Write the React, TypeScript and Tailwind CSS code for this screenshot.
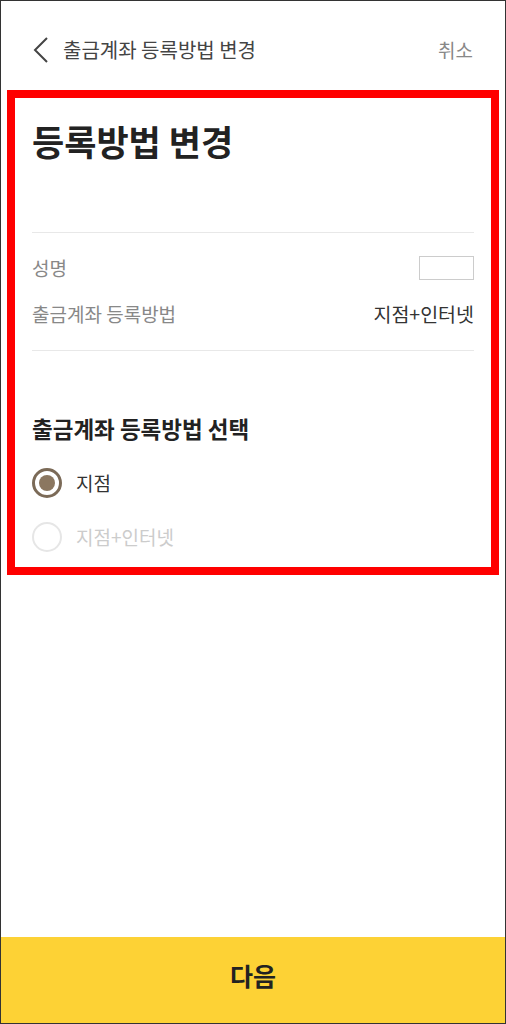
import React from 'react';

export default function App() {
  const rows = [
    { label: '성명', value: null },
    { label: '출금계좌 등록방법', value: '지점+인터넷' },
  ];

  const options = [
    { label: '지점', checked: true },
    { label: '지점+인터넷', checked: false },
  ];

  return (
    <div
      className="w-[506px] h-[1024px] bg-white border border-[#333] flex flex-col"
      style={{ fontFamily: '"Noto Sans CJK KR", "Noto Sans", sans-serif' }}
    >
      {/* Header */}
      <div className="mt-[36px] mb-[27px] h-[26px] px-[32px] flex items-center justify-between">
        <div className="flex items-center">
          <svg width="16" height="26" viewBox="0 0 16 26" className="mr-[14px]">
            <path d="M14 1 L2 13 L14 25" fill="none" stroke="#444" strokeWidth="2" />
          </svg>
          <span className="text-[20px] text-[#444] leading-[26px]">출금계좌 등록방법 변경</span>
        </div>
        <span className="text-[19px] text-[#888] leading-[26px]">취소</span>
      </div>

      {/* Content */}
      <div className="mx-[6px] border-[8px] border-[#ff0000] px-[17px] pt-[23px] pb-[15px]">
        <h1 className="text-[35px] font-bold text-[#222] leading-[40px]">등록방법 변경</h1>
        <div className="mt-[71px] h-px bg-[#e8e8e8]" />

        <div className="mt-[22px] flex flex-col gap-[20px]">
          {rows.map((row) => (
            <div key={row.label} className="h-[26px] flex items-center justify-between">
              <span className="text-[19px] text-[#888] leading-[26px]">{row.label}</span>
              {row.value ? (
                <span className="text-[19.5px] text-[#333] leading-[26px]">{row.value}</span>
              ) : (
                <div className="w-[55px] h-[24px] border border-[#ccc]" />
              )}
            </div>
          ))}
        </div>
        <div className="mt-[23px] h-px bg-[#e8e8e8]" />

        <h2 className="mt-[63px] text-[22.5px] font-bold text-[#222] leading-[28px]">출금계좌 등록방법 선택</h2>

        <div className="mt-[26px] flex flex-col gap-[24px]">
          {options.map((opt) => (
            <div key={opt.label} className="flex items-center h-[30px]">
              <div
                className={
                  opt.checked
                    ? 'w-[30px] h-[30px] rounded-full border-[3px] border-[#7b6a57] flex items-center justify-center'
                    : 'w-[30px] h-[30px] rounded-full border-[2px] border-[#e6e6e6]'
                }
              >
                {opt.checked && <div className="w-[16px] h-[16px] rounded-full bg-[#8b7760]" />}
              </div>
              <span
                className={
                  opt.checked
                    ? 'ml-[14px] text-[19px] text-[#333] leading-[26px]'
                    : 'ml-[14px] text-[19px] text-[#ccc] leading-[26px]'
                }
              >
                {opt.label}
              </span>
            </div>
          ))}
        </div>
      </div>

      {/* Bottom button */}
      <button className="mt-auto h-[86px] w-full bg-[#fdd235] flex items-center justify-center pb-[8px]">
        <span className="text-[25px] font-bold text-[#222]">다음</span>
      </button>
    </div>
  );
}
